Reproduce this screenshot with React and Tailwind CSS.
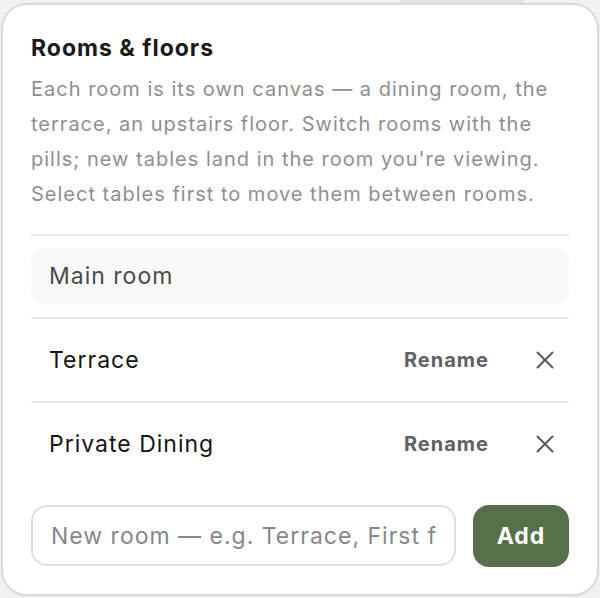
const rooms = ["Terrace", "Private Dining"];

const CloseIcon = () => (
  <svg width="18" height="18" viewBox="0 0 18 18" fill="none" stroke="currentColor" strokeWidth="2" strokeLinecap="round">
    <path d="M1.5 1.5l15 15M16.5 1.5l-15 15" />
  </svg>
);

export default function App() {
  return (
    <div className="flex h-[598px] w-[600px] flex-col bg-[#f0f0f2] font-[Inter,sans-serif]">
      {/* edge of the element above */}
      <div className="flex h-[3px] shrink-0">
        <div className="w-[400px]" />
        <div className="w-[123px] bg-[#e2e2e4]" />
      </div>

      <div className="mx-px h-[593px] rounded-[26px] border-2 border-[#d9d9de] bg-white px-[28px] pt-[28px]">
        <h2 className="text-[23px] font-bold leading-[30px] tracking-[1px] text-[#1a1a1a]">Rooms &amp; floors</h2>
        <p className="mt-[9px] text-[20px] leading-[35px] tracking-[1px] text-[#8e8e93]">
          Each room is its own canvas — a dining room, the terrace, an upstairs floor. Switch rooms with the
          pills; new tables land in the room you're viewing. Select tables first to move them between rooms.
        </p>

        <div className="mt-[22px] border-t-2 border-[#ebebed] py-[12px]">
          <div className="flex h-[57px] items-center rounded-[16px] bg-[#f9f9f9] px-[18px] text-[23px] tracking-[1px] text-[#4a4a4a]">
            Main room
          </div>
        </div>

        {rooms.map((r) => (
          <div key={r} className="flex h-[84px] items-center border-t-2 border-[#ebebed] pl-[18px] pr-[15px]">
            <span className="flex-1 text-[23px] tracking-[1px] text-[#141414]">{r}</span>
            <button className="text-[20px] font-bold tracking-[1px] text-[#606066]">Rename</button>
            <button className="ml-[47px] text-[#5a5a60]">
              <CloseIcon />
            </button>
          </div>
        ))}

        <div className="mt-[20px] flex gap-[17px]">
          <input
            className="h-[61px] min-w-0 flex-1 rounded-[16px] border-2 border-[#dedee2] px-[18px] text-[23px] tracking-[1px] outline-none placeholder:text-[#86868b]"
            placeholder="New room — e.g. Terrace, First floor, Patio"
          />
          <button className="h-[62px] w-[96px] rounded-[16px] bg-[#56704a] text-[23px] font-bold tracking-[1px] text-white">
            Add
          </button>
        </div>
      </div>
    </div>
  );
}
